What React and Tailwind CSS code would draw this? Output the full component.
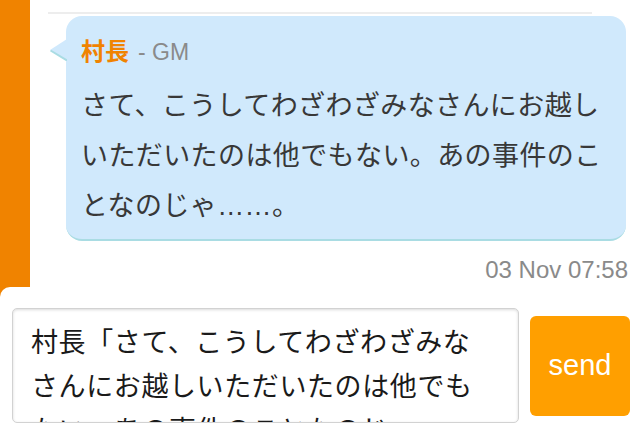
import React from "react";

const JP = { fontFamily: '"Liberation Sans", "Noto Sans CJK JP", sans-serif' };

function Tail() {
  return (
    <svg width="17" height="22" viewBox="0 0 17 22" className="absolute left-[-16px] top-[23px]">
      <polygon points="17,0 0,11 17,22" fill="#d0e9fc" />
      <line x1="0.5" y1="11.5" x2="17" y2="21.5" stroke="#a9dce3" strokeWidth="2" />
    </svg>
  );
}

export default function App() {
  return (
    <div className="w-[640px] h-[441px] overflow-hidden bg-white flex flex-col" style={JP}>
      {/* chat area */}
      <div className="h-[297px] flex shrink-0">
        <div className="w-[30px] bg-[#f08300]" />
        <div className="flex-1 flex flex-col">
          <div className="mt-[12px] ml-[18px] mr-[48px] h-[2px] bg-[#ededed]" />
          <div className="relative mt-[2px] ml-[36px] mr-[14px] rounded-[16px] bg-[#d0e9fc] border-b-2 border-[#a9dce3] pt-[20px] pb-[8px] pl-[15px] pr-[10px]">
            <Tail />
            <div className="flex items-baseline gap-[9px] leading-[32px]">
              <span className="text-[24px] font-bold text-[#f08300]">村長</span>
              <span className="text-[23px] text-[#8a8a8a]">- GM</span>
            </div>
            <p className="mt-[13px] text-[27px] tracking-[0.4px] leading-[50px] text-[#383838]">
              さて、こうしてわざわざみなさんにお越しいただいたのは他でもない。あの事件のことなのじゃ……。
            </p>
          </div>
          <div className="mt-[16px] pr-[12px] text-right text-[24px] leading-[26px] text-[#8a8a8a]">
            03 Nov 07:58
          </div>
        </div>
      </div>

      {/* input panel */}
      <div className="relative -mt-[10px] flex-1 bg-white rounded-t-[10px] flex items-center gap-[11px] pl-[12px] pr-[10px] pt-[3px]">
        <div className="w-[507px] h-[115px] overflow-hidden rounded-[5px] border border-[#d2d2d2] shadow-[inset_0_1px_3px_rgba(0,0,0,0.15)] pl-[18px] pr-[30px] pt-[12px]">
          <p className="text-[27px] tracking-[0.6px] leading-[44px] text-[#1a1a1a]">
            村長「さて、こうしてわざわざみなさんにお越しいただいたのは他でもない。あの事件のことなのじゃ……。」
          </p>
        </div>
        <button className="w-[100px] h-[100px] rounded-[6px] bg-[#ff9f00] text-white text-[29px]">
          send
        </button>
      </div>
    </div>
  );
}
